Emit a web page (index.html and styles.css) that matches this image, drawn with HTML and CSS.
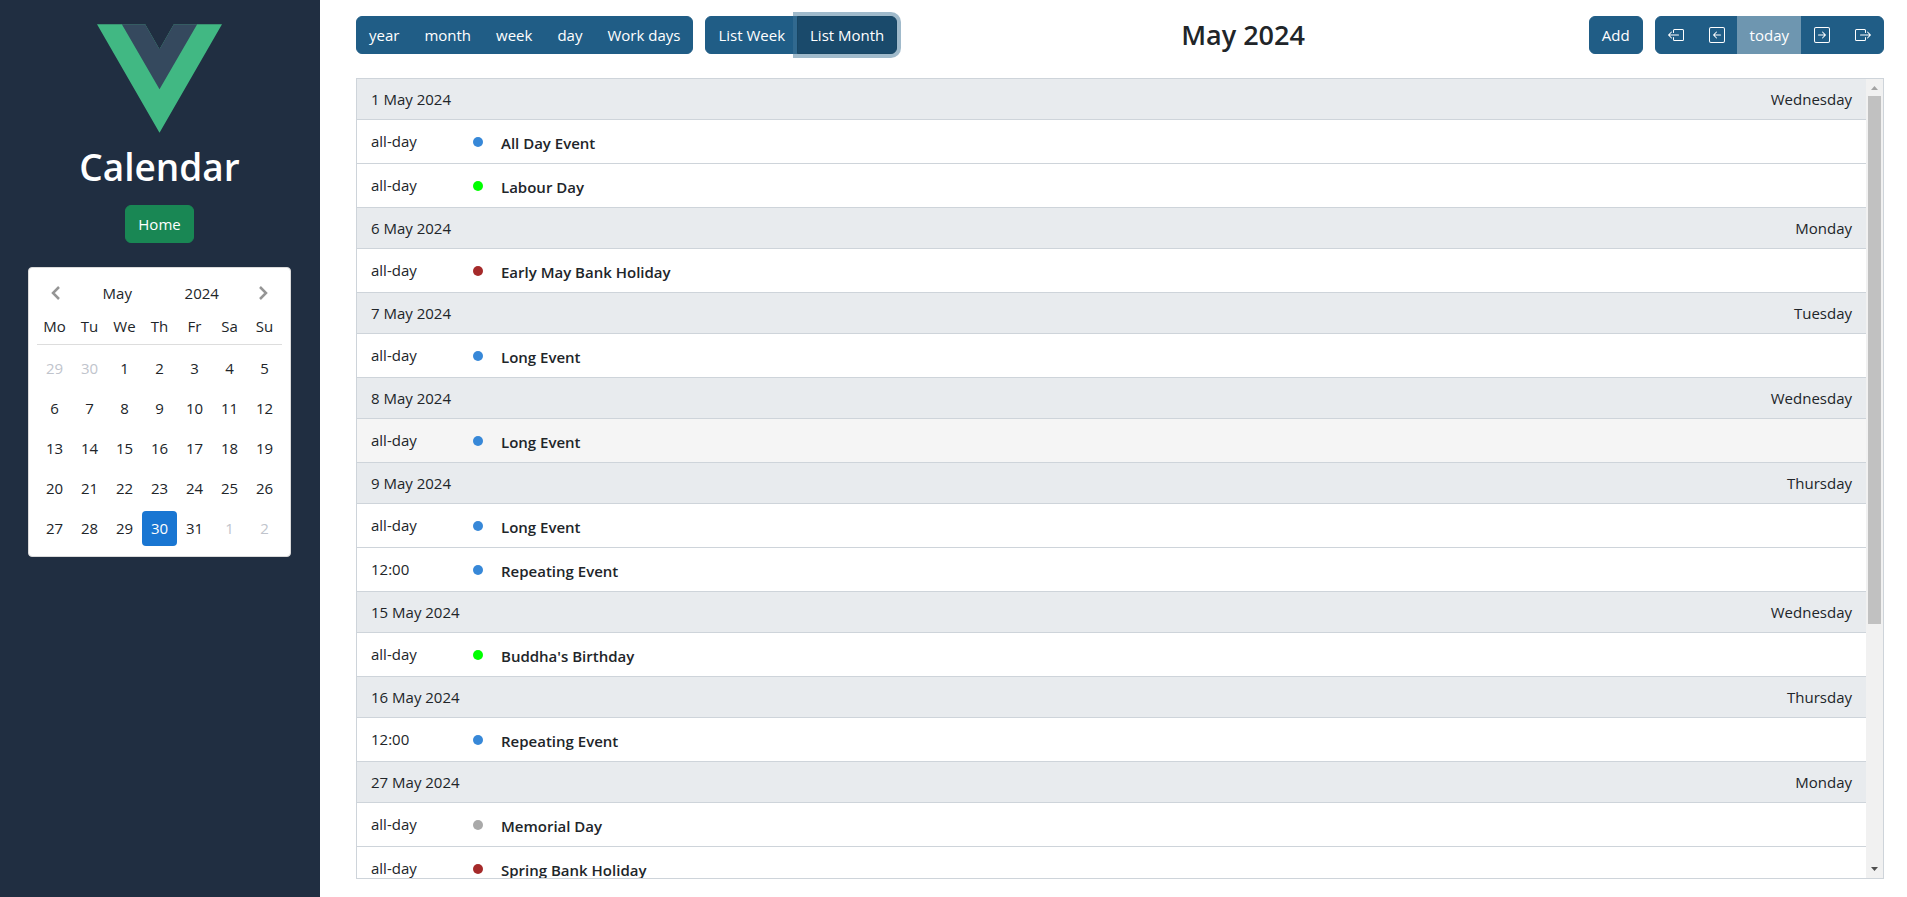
FILE: index.html
```
<!DOCTYPE html>
<html lang="en">
<head>
<meta charset="utf-8">
<title>Calendar</title>
<meta name="viewport" content="width=device-width, initial-scale=1">
<link rel="stylesheet" href="styles.css">
</head>
<body>
<div class="app">
  <aside class="sidebar">
    <svg class="logo" viewBox="0 0 262 227" role="img" aria-label="Vue logo">
      <path fill="#41b883" d="M161 0 131 52 101 0H0l131 227L262 0z"/>
      <path fill="#35495e" d="M161 0 131 52 101 0H52l79 136L210 0z"/>
    </svg>
    <h1 class="brand">Calendar</h1>
    <button class="btn btn-home" type="button">Home</button>

    <section class="picker" aria-label="Date picker">
      <div class="picker-head">
        <button type="button" aria-label="Previous month"><svg class="chevron" viewBox="0 0 10 14"><path d="M8 1 2 7l6 6"/></svg></button>
        <button type="button">May</button>
        <button type="button">2024</button>
        <button type="button" aria-label="Next month"><svg class="chevron" viewBox="0 0 10 14"><path d="m2 1 6 6-6 6"/></svg></button>
      </div>
      <table class="picker-grid">
        <thead><tr><th>Mo</th><th>Tu</th><th>We</th><th>Th</th><th>Fr</th><th>Sa</th><th>Su</th></tr></thead>
        <tbody>
          <tr><td><button class="other">29</button></td><td><button class="other">30</button></td><td><button>1</button></td><td><button>2</button></td><td><button>3</button></td><td><button>4</button></td><td><button>5</button></td></tr>
          <tr><td><button>6</button></td><td><button>7</button></td><td><button>8</button></td><td><button>9</button></td><td><button>10</button></td><td><button>11</button></td><td><button>12</button></td></tr>
          <tr><td><button>13</button></td><td><button>14</button></td><td><button>15</button></td><td><button>16</button></td><td><button>17</button></td><td><button>18</button></td><td><button>19</button></td></tr>
          <tr><td><button>20</button></td><td><button>21</button></td><td><button>22</button></td><td><button>23</button></td><td><button>24</button></td><td><button>25</button></td><td><button>26</button></td></tr>
          <tr><td><button>27</button></td><td><button>28</button></td><td><button>29</button></td><td><button class="selected">30</button></td><td><button>31</button></td><td><button class="other">1</button></td><td><button class="other">2</button></td></tr>
        </tbody>
      </table>
    </section>
  </aside>

  <main class="main">
    <header class="toolbar">
      <div class="toolbar-part">
        <div class="btn-group">
          <button class="btn" type="button">year</button>
          <button class="btn" type="button">month</button>
          <button class="btn" type="button">week</button>
          <button class="btn" type="button">day</button>
          <button class="btn" type="button">Work days</button>
        </div>
        <div class="btn-group">
          <button class="btn" type="button">List Week</button>
          <button class="btn active" type="button" aria-pressed="true">List Month</button>
        </div>
      </div>
      <h2 class="title">May 2024</h2>
      <div class="toolbar-part">
        <button class="btn" type="button">Add</button>
        <div class="btn-group">
          <button class="btn" type="button" aria-label="Previous year"><svg class="icon" viewBox="0 0 16 16"><path d="M6 12.5a.5.5 0 0 0 .5.5h8a.5.5 0 0 0 .5-.5v-9a.5.5 0 0 0-.5-.5h-8a.5.5 0 0 0-.5.5v2a.5.5 0 0 1-1 0v-2A1.5 1.5 0 0 1 6.5 2h8A1.5 1.5 0 0 1 16 3.5v9a1.5 1.5 0 0 1-1.5 1.5h-8A1.5 1.5 0 0 1 5 12.5v-2a.5.5 0 0 1 1 0z"/><path d="M.146 8.354a.5.5 0 0 1 0-.708l3-3a.5.5 0 1 1 .708.708L1.707 7.5H10.5a.5.5 0 0 1 0 1H1.707l2.147 2.146a.5.5 0 0 1-.708.708z"/></svg></button>
          <button class="btn" type="button" aria-label="Previous month"><svg class="icon" viewBox="0 0 16 16"><path fill-rule="evenodd" d="M15 2a1 1 0 0 0-1-1H2a1 1 0 0 0-1 1v12a1 1 0 0 0 1 1h12a1 1 0 0 0 1-1zM0 2a2 2 0 0 1 2-2h12a2 2 0 0 1 2 2v12a2 2 0 0 1-2 2H2a2 2 0 0 1-2-2zm11.5 5.5a.5.5 0 0 1 0 1H5.707l2.147 2.146a.5.5 0 0 1-.708.708l-3-3a.5.5 0 0 1 0-.708l3-3a.5.5 0 1 1 .708.708L5.707 7.5z"/></svg></button>
          <button class="btn" type="button" disabled>today</button>
          <button class="btn" type="button" aria-label="Next month"><svg class="icon flip" viewBox="0 0 16 16"><path fill-rule="evenodd" d="M15 2a1 1 0 0 0-1-1H2a1 1 0 0 0-1 1v12a1 1 0 0 0 1 1h12a1 1 0 0 0 1-1zM0 2a2 2 0 0 1 2-2h12a2 2 0 0 1 2 2v12a2 2 0 0 1-2 2H2a2 2 0 0 1-2-2zm11.5 5.5a.5.5 0 0 1 0 1H5.707l2.147 2.146a.5.5 0 0 1-.708.708l-3-3a.5.5 0 0 1 0-.708l3-3a.5.5 0 1 1 .708.708L5.707 7.5z"/></svg></button>
          <button class="btn" type="button" aria-label="Next year"><svg class="icon flip" viewBox="0 0 16 16"><path d="M6 12.5a.5.5 0 0 0 .5.5h8a.5.5 0 0 0 .5-.5v-9a.5.5 0 0 0-.5-.5h-8a.5.5 0 0 0-.5.5v2a.5.5 0 0 1-1 0v-2A1.5 1.5 0 0 1 6.5 2h8A1.5 1.5 0 0 1 16 3.5v9a1.5 1.5 0 0 1-1.5 1.5h-8A1.5 1.5 0 0 1 5 12.5v-2a.5.5 0 0 1 1 0z"/><path d="M.146 8.354a.5.5 0 0 1 0-.708l3-3a.5.5 0 1 1 .708.708L1.707 7.5H10.5a.5.5 0 0 1 0 1H1.707l2.147 2.146a.5.5 0 0 1-.708.708z"/></svg></button>
        </div>
      </div>
    </header>

    <section class="list" aria-label="Events">
      <div class="list-view">
        <table class="events">
          <tbody>
            <tr class="day"><th colspan="3"><div class="day-cushion"><span>1 May 2024</span><span>Wednesday</span></div></th></tr>
            <tr class="event"><td class="time">all-day</td><td class="mark"><span class="dot blue"></span></td><td class="name">All Day Event</td></tr>
            <tr class="event"><td class="time">all-day</td><td class="mark"><span class="dot lime"></span></td><td class="name">Labour Day</td></tr>
            <tr class="day"><th colspan="3"><div class="day-cushion"><span>6 May 2024</span><span>Monday</span></div></th></tr>
            <tr class="event"><td class="time">all-day</td><td class="mark"><span class="dot brown"></span></td><td class="name">Early May Bank Holiday</td></tr>
            <tr class="day"><th colspan="3"><div class="day-cushion"><span>7 May 2024</span><span>Tuesday</span></div></th></tr>
            <tr class="event"><td class="time">all-day</td><td class="mark"><span class="dot blue"></span></td><td class="name">Long Event</td></tr>
            <tr class="day"><th colspan="3"><div class="day-cushion"><span>8 May 2024</span><span>Wednesday</span></div></th></tr>
            <tr class="event hovered"><td class="time">all-day</td><td class="mark"><span class="dot blue"></span></td><td class="name">Long Event</td></tr>
            <tr class="day"><th colspan="3"><div class="day-cushion"><span>9 May 2024</span><span>Thursday</span></div></th></tr>
            <tr class="event"><td class="time">all-day</td><td class="mark"><span class="dot blue"></span></td><td class="name">Long Event</td></tr>
            <tr class="event"><td class="time">12:00</td><td class="mark"><span class="dot blue"></span></td><td class="name">Repeating Event</td></tr>
            <tr class="day"><th colspan="3"><div class="day-cushion"><span>15 May 2024</span><span>Wednesday</span></div></th></tr>
            <tr class="event"><td class="time">all-day</td><td class="mark"><span class="dot lime"></span></td><td class="name">Buddha's Birthday</td></tr>
            <tr class="day"><th colspan="3"><div class="day-cushion"><span>16 May 2024</span><span>Thursday</span></div></th></tr>
            <tr class="event"><td class="time">12:00</td><td class="mark"><span class="dot blue"></span></td><td class="name">Repeating Event</td></tr>
            <tr class="day"><th colspan="3"><div class="day-cushion"><span>27 May 2024</span><span>Monday</span></div></th></tr>
            <tr class="event"><td class="time">all-day</td><td class="mark"><span class="dot gray"></span></td><td class="name">Memorial Day</td></tr>
            <tr class="event"><td class="time">all-day</td><td class="mark"><span class="dot brown"></span></td><td class="name">Spring Bank Holiday</td></tr>
          </tbody>
        </table>
      </div>
      <div class="scrollbar" aria-hidden="true">
        <svg class="arrow up" viewBox="0 0 17 17"><path d="M5 11h7L8.5 7z"/></svg>
        <div class="track"><div class="thumb"></div></div>
        <svg class="arrow" viewBox="0 0 17 17"><path d="M5 6h7l-3.5 4z"/></svg>
      </div>
    </section>
  </main>
</div>
</body>
</html>
```
FILE: styles.css
```
:root {
  --primary: #205d86;
  --primary-active: #1a4a6b;
  --text: #212529;
  --line: #ced4da;
}

*, *::before, *::after { box-sizing: border-box; }

body {
  margin: 0;
  background: #fff;
  color: var(--text);
  font: 400 15px/24px "Open Sans", "Noto Sans", sans-serif;
}

button { font: inherit; color: inherit; cursor: pointer; }

.app { display: flex; height: 100vh; }

/* Sidebar */
.sidebar {
  flex: none;
  width: 320px;
  padding: 24px 29px 24px 28px;
  display: flex;
  flex-direction: column;
  align-items: center;
  background: #202e41;
  color: #fff;
}

.logo { width: 125px; height: 109px; }

.brand {
  margin: 10px 0 14px;
  font-size: 37px;
  line-height: 48px;
  font-weight: 600;
}

.btn {
  height: 38px;
  padding: 6px 12px;
  display: flex;
  align-items: center;
  border: 1px solid var(--primary);
  border-radius: 6px;
  background: var(--primary);
  color: #fff;
  white-space: nowrap;
}

.btn-home { border-color: #198754; background: #198754; }

/* Date picker */
.picker {
  width: 263px;
  margin-top: 24px;
  padding: 7px 8px 8px;
  border: 1px solid #dadada;
  border-radius: 4px;
  background: #fff;
  color: var(--text);
}

.picker button {
  width: 100%;
  height: 35px;
  padding: 0;
  display: block;
  border: 0;
  border-radius: 4px;
  background: none;
}

.picker-head { display: grid; grid-template-columns: 38px 1fr 1fr 38px; }

.chevron {
  width: 10px;
  height: 14px;
  display: block;
  margin: 0 auto;
  fill: none;
  stroke: #959595;
  stroke-width: 2.5;
}

.picker-grid { width: 100%; table-layout: fixed; border-collapse: collapse; text-align: center; }
.picker-grid th { height: 34px; padding: 0 0 2px; font-weight: 400; border-bottom: 1px solid #ddd; }
.picker-grid td { height: 40px; padding: 0; }
.picker-grid tbody::before { content: ""; display: table-row; height: 4px; }
.picker .other { color: #c0c4cc; }
.picker .selected { background: #1976d2; color: #fff; }

/* Toolbar */
.main {
  flex: 1;
  min-width: 0;
  padding: 16px 23px 18px 36px;
  display: flex;
  flex-direction: column;
  gap: 24px;
}

.toolbar { display: flex; justify-content: space-between; align-items: center; }
.toolbar-part { display: flex; gap: 12px; }
.title { margin: 0; font-size: 27px; line-height: 38px; font-weight: 600; }

.btn-group { display: flex; }
.btn-group .btn { border-radius: 0; }
.btn-group .btn + .btn { margin-left: -1px; }
.btn-group .btn:first-child { border-radius: 6px 0 0 6px; }
.btn-group .btn:last-child { border-radius: 0 6px 6px 0; }
.btn.active {
  background: var(--primary-active);
  border-color: #184664;
  box-shadow: 0 0 0 4px rgba(65, 117, 152, 0.5);
}
.btn:disabled { background: #6e96b0; border-color: #6e96b0; cursor: default; }

.icon { width: 16px; height: 16px; fill: currentColor; }
.flip { transform: scaleX(-1); }

/* Event list */
.list { flex: 1; min-height: 0; display: flex; border: 1px solid var(--line); }
.list-view { flex: 1; min-width: 0; overflow: hidden; }

.events { width: 100%; border-collapse: separate; border-spacing: 0; }
.events th, .events td { padding: 0; border-bottom: 1px solid var(--line); vertical-align: top; }
.day-cushion {
  height: 40px;
  padding: 8px 14px;
  display: flex;
  justify-content: space-between;
  background: #e8ebee;
  font-weight: 400;
}
.events .event td { height: 44px; }
.event.hovered { background: #f5f5f5; }
.events .event .time { width: 102px; padding: 9px 14px 0; }
.events .event .mark { width: 28px; padding: 17px 4px 0 14px; }
.events .event .name { padding: 11px 14px 0; font-weight: 600; }

.dot { display: block; width: 10px; height: 10px; border-radius: 50%; }
.blue { background: #3788d8; }
.lime { background: #00ff00; }
.brown { background: #a52a2a; }
.gray { background: #a9a9a9; }

.scrollbar { flex: none; width: 17px; display: flex; flex-direction: column; background: #f1f1f1; }
.arrow { width: 17px; height: 17px; fill: #505050; }
.arrow.up { fill: #a3a3a3; }
.track { flex: 1; padding: 0 2px; }
.thumb { height: 69%; background: #c1c1c1; }
```
